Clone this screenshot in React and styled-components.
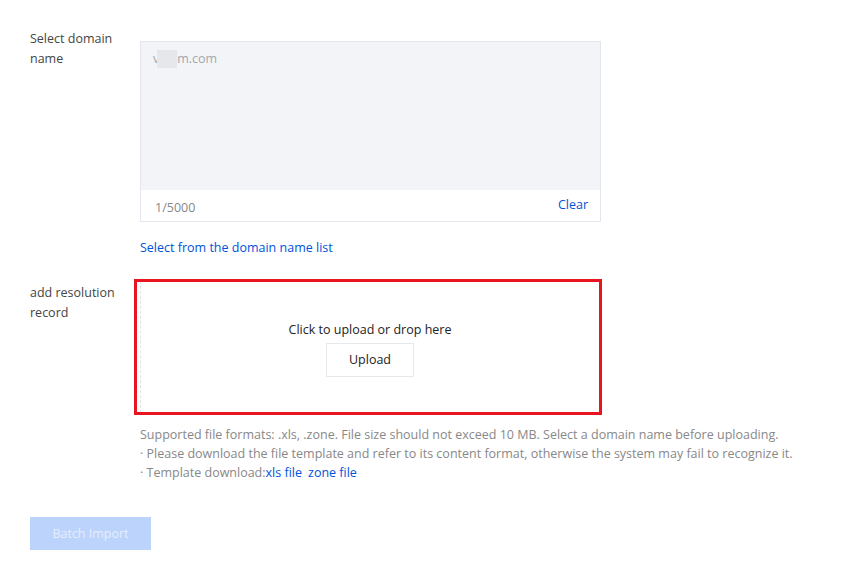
import React from "react";
import styled, { createGlobalStyle } from "styled-components";

const Global = createGlobalStyle`
  html, body { margin: 0; padding: 0; background: #fff; }
  body { font-family: "Segoe UI", "Open Sans", "Noto Sans", sans-serif; font-size: 12.5px; color: #333; }
`;

const Page = styled.div`
  padding: 29px 30px 0 30px;
  display: flex;
  flex-direction: column;
`;

const Row = styled.div`
  display: flex;
  align-items: flex-start;
  margin-bottom: ${p => p.$mb || 0}px;
`;

const Label = styled.div`
  width: 110px;
  flex: none;
  font-size: 12.5px;
  line-height: 20px;
  color: #444;
  padding-top: ${p => p.$pt || 0}px;
  padding-right: 20px;
  box-sizing: border-box;
`;

const Field = styled.div`
  display: flex;
  flex-direction: column;
  padding-top: ${p => p.$pt || 0}px;
`;

const TextBox = styled.div`
  width: 461px;
  height: 181px;
  border: 1px solid #e3e6ed;
  box-sizing: border-box;
  display: flex;
  flex-direction: column;
`;

const TextArea = styled.div`
  flex: 1;
  background: #f3f4f7;
  padding: 8px 12px;
  font-size: 12.5px;
  line-height: 16px;
  color: #a3a6ad;
  display: flex;
  align-items: center;
  align-self: stretch;
  align-content: flex-start;
  flex-wrap: wrap;
`;

const Blur = styled.span`
  display: inline-block;
  width: 20px;
  height: 18px;
  background: #e6e7ea;
  margin-left: -2px;
`;

const Footer = styled.div`
  height: 31px;
  flex: none;
  display: flex;
  justify-content: space-between;
  align-items: center;
  padding: 0 12px 0 14px;
  background: #fff;
`;

const Counter = styled.span`
  color: #888;
  font-size: 12.5px;
  padding-top: 3px;
`;

const Link = styled.a`
  color: #0052d9;
  font-size: 12.5px;
  text-decoration: none;
  cursor: pointer;
`;

const ClearLink = styled(Link)`
  padding-bottom: 3px;
`;

const ListLink = styled(Link)`
  display: block;
  line-height: 20px;
  margin-top: 16px;
`;

const UploadWrap = styled.div`
  position: relative;
  width: 460px;
  height: 132px;
`;

const UploadArea = styled.div`
  width: 100%;
  height: 100%;
  box-sizing: border-box;
  border: 1px dashed #dfe2e8;
  display: flex;
  flex-direction: column;
  align-items: center;
  justify-content: center;
  gap: 4px;
`;

const UploadText = styled.div`
  font-size: 12.5px;
  line-height: 18px;
  color: #222;
  margin-top: 3px;
`;

const UploadButton = styled.button`
  width: 88px;
  height: 34px;
  background: #fff;
  border: 1px solid #e6e8ec;
  font-family: inherit;
  font-size: 12.5px;
  color: #222;
  cursor: pointer;
`;

const Highlight = styled.div`
  position: absolute;
  left: -6px;
  top: -2px;
  width: 468px;
  height: 136px;
  border: 3px solid #e8141f;
  box-sizing: border-box;
  pointer-events: none;
`;

const Help = styled.div`
  margin-top: 12px;
  font-size: 12.5px;
  line-height: 19px;
  color: #888;
  white-space: nowrap;
`;

const InlineLink = styled.a`
  color: #0052d9;
  text-decoration: none;
  margin-right: ${p => p.$mr || 0}px;
`;

const SubmitButton = styled.button`
  margin-top: 35px;
  width: 121px;
  height: 33px;
  background: #bcd3fb;
  border: none;
  color: #e6eefe;
  font-family: inherit;
  font-size: 12.5px;
  cursor: not-allowed;
  align-self: flex-start;
`;

export default function App() {
  return (
    <>
      <Global />
      <Page>
        <Row $mb={23}>
          <Label>Select domain name</Label>
          <Field $pt={12}>
            <TextBox>
              <TextArea>
                <span>v</span>
                <Blur />
                <span>m.com</span>
              </TextArea>
              <Footer>
                <Counter>1/5000</Counter>
                <ClearLink>Clear</ClearLink>
              </Footer>
            </TextBox>
            <ListLink>Select from the domain name list</ListLink>
          </Field>
        </Row>
        <Row>
          <Label $pt={2}>add resolution record</Label>
          <Field>
            <UploadWrap>
              <UploadArea>
                <UploadText>Click to upload or drop here</UploadText>
                <UploadButton>Upload</UploadButton>
              </UploadArea>
              <Highlight />
            </UploadWrap>
            <Help>
              <div>Supported file formats: .xls, .zone. File size should not exceed 10 MB. Select a domain name before uploading.</div>
              <div>· Please download the file template and refer to its content format, otherwise the system may fail to recognize it.</div>
              <div>
                · Template download:<InlineLink $mr={6}>xls file</InlineLink>
                <InlineLink>zone file</InlineLink>
              </div>
            </Help>
          </Field>
        </Row>
        <SubmitButton disabled>Batch Import</SubmitButton>
      </Page>
    </>
  );
}
